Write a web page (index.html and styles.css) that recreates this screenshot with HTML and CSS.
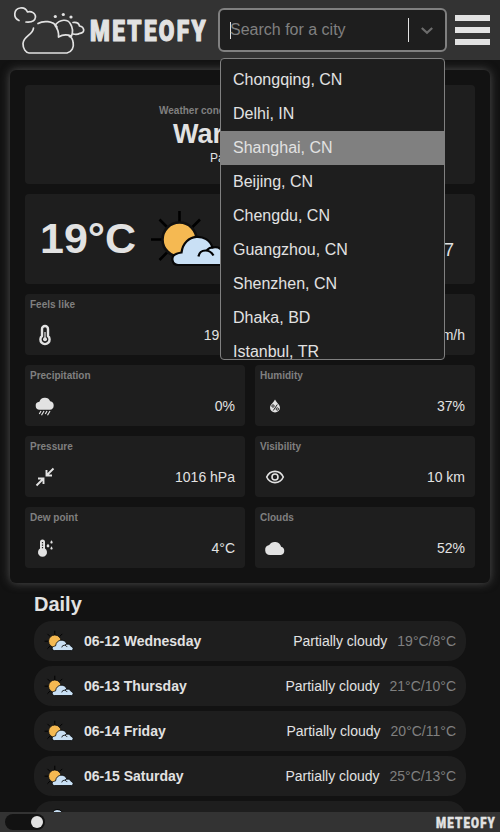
FILE: index.html
```html
<!DOCTYPE html>
<html lang="en">
<head>
<meta charset="utf-8">
<title>Meteofy</title>
<link rel="stylesheet" href="styles.css">
</head>
<body>
<svg class="defs" width="0" height="0">
  <symbol id="partly" viewBox="0 0 80 60">
    <g stroke="#000" stroke-width="2.600" fill="none">
      <path d="M28.500 2v12M0 30.500h12M8.500 10.500l8 8M49 10.500l-8 8M8.500 51l8-8"/>
      <circle cx="28.500" cy="30.500" r="17" fill="#f5b952" stroke="#111"/>
      <path d="M27 56a5.700 5.700 0 0 1-2-11q2-1 5.500-1.500C33 23.500 57 23.500 61.500 38.500q8-2 11 6q5.500 1 6 6q0 5.500-4 5.500z" fill="#c9e0f5" stroke="#080808" stroke-width="2.200"/>
      <path d="M47.500 47.500q1-6 7-6q5 0 8 5M56 41q3-3 6.500-2.500" stroke-width="2.200"/>
    </g>
  </symbol>
</svg>
<header class="top">
  <div class="brandbox">
    <svg width="89" height="60" viewBox="0 0 89 60">
      <g fill="none" stroke="#e2e2e2" stroke-width="1.700" stroke-linecap="round" stroke-linejoin="round">
        <path d="M19 20.500C12.500 17.500 14 9 20 8c4-.8 6.500 1.500 7.500 4c4-1 8 1 8 5c-.5 4-4 5.500-9.500 5"/>
        <path d="M38 23.500c5-3 15-3 19 3.500M33.500 28c-.5 7-10 8-10.500 15.500c-.2 5 3 9.500 6 9.500h38c5-1 7-6 6.200-10c-.4-4-1.700-6-4-6.500M55 25.500c5-7 13-6.500 15.500-1.500c2.500 4 2.500 8 1 12c-4-1.500-9-1.500-13 1c.5-5-1-8.500-3.500-11.500M73 22.500c4-.5 6 1 6.500 3.500c5 1 6 7 .5 7.300c-2 1.200-4 1.500-7 .7"/>
      </g>
      <g fill="#e2e2e2"><circle cx="55.300" cy="16.500" r="1.600"/><circle cx="63.300" cy="14.500" r="1.600"/><circle cx="71" cy="17" r="1.600"/></g>
    </svg>
    <svg width="120" height="44" viewBox="0 0 120 44"><text class="brand" x="1" y="33" textLength="118" lengthAdjust="spacingAndGlyphs">METEOFY</text></svg>
  </div>
  <div class="search">
    <span class="caret"></span><span class="hint">Search for a city</span>
    <span class="sep"></span>
    <svg class="chev" width="20" height="20" viewBox="0 0 20 20"><path d="M4.800 8l5.200 4.800 5.200-4.800" fill="none" stroke="#6c6c6c" stroke-width="2.200"/></svg>
    <div class="menu">
      <div>Chongqing, CN</div><div>Delhi, IN</div><div class="on">Shanghai, CN</div><div>Beijing, CN</div><div>Chengdu, CN</div><div>Guangzhou, CN</div><div>Shenzhen, CN</div><div>Dhaka, BD</div><div>Istanbul, TR</div>
    </div>
  </div>
  <div class="burger"><i></i><i></i><i></i></div>
</header>
<main>
  <section class="panel">
    <div class="card cond">
      <small>Weather conditions in Warsaw, PL</small>
      <strong>Warm today</strong>
      <span>Partially cloudy</span>
    </div>
    <div class="card temp">
      <b>19°C</b>
      <svg width="80" height="60"><use href="#partly"/></svg>
      <span>13:07</span>
    </div>
    <div class="grid">
      <div class="card stat"><h4>Feels like</h4><div>
        <svg width="20" height="20" viewBox="0 0 20 20"><path d="M7 11V4a3 3 0 0 1 6 0v7a4.600 4.600 0 1 1-6 0z" fill="none" stroke="#e2e2e2" stroke-width="2.400"/><path d="M10 7v7" stroke="#e2e2e2" stroke-width="1.200"/><circle cx="10" cy="14.200" r="2" fill="#e2e2e2"/></svg><span>19°C</span></div></div>
      <div class="card stat"><h4>Wind</h4><div>
        <svg width="20" height="20" viewBox="0 0 20 20"><path d="M2 8h10q3 0 3-3t-3-2M2 12h14" fill="none" stroke="#e2e2e2" stroke-width="1.500"/></svg><span>11 km/h</span></div></div>
      <div class="card stat"><h4>Precipitation</h4><div>
        <svg width="20" height="20" viewBox="0 0 20 20"><path d="M5 13.800a4 4 0 0 1-.6-8A5.800 5.800 0 0 1 15.200 5.300A4.300 4.300 0 0 1 14.800 13.800z" fill="#e2e2e2"/><path d="M6 15l-1.700 3M9 15l-2.500 4.300M12 15l-1.700 3M15 15l-2.500 4.300" stroke="#e2e2e2" stroke-width="1.200"/></svg><span>0%</span></div></div>
      <div class="card stat"><h4>Humidity</h4><div>
        <svg width="20" height="20" viewBox="0 0 20 20"><path d="M10 3.500C8 7 5 9 5 11.800a5 4.700 0 0 0 10 0C15 9 12 7 10 3.500z" fill="#e2e2e2"/><path d="M12.300 8.500l-4 6" stroke="#1e1e1e"/><circle cx="8" cy="10" r="1.200" fill="none" stroke="#1e1e1e" stroke-width=".9"/><circle cx="12.300" cy="13" r="1.200" fill="none" stroke="#1e1e1e" stroke-width=".9"/></svg><span>37%</span></div></div>
      <div class="card stat"><h4>Pressure</h4><div>
        <svg width="20" height="20" viewBox="0 0 20 20"><path d="M18.500 1.500L12 8M11.500 3v5.500H17M1.500 18.500L8 12M3 11.500h5.500V17" fill="none" stroke="#e2e2e2" stroke-width="1.900"/></svg><span>1016 hPa</span></div></div>
      <div class="card stat"><h4>Visibility</h4><div>
        <svg width="20" height="20" viewBox="0 0 20 20"><path d="M1.700 10C5 2.500 15 2.500 18.300 10C15 17.500 5 17.500 1.700 10z" fill="none" stroke="#e2e2e2" stroke-width="1.600"/><circle cx="10" cy="10" r="3" fill="none" stroke="#e2e2e2" stroke-width="1.600"/></svg><span>10 km</span></div></div>
      <div class="card stat"><h4>Dew point</h4><div>
        <svg width="20" height="20" viewBox="0 0 20 20"><path d="M5 10.500V4a2.500 2.500 0 0 1 5 0v6.500a4.500 4.500 0 1 1-5 0z" fill="#e2e2e2"/><path d="M7.500 4v1.200M7.500 6.500v1.200M7.500 9v1.200" stroke="#1e1e1e" stroke-width="1.200"/><g fill="#e2e2e2"><path d="M13 5.800l1.200 1.800a1.300 1.300 0 1 1-2.400 0z"/><path d="M16.500 2.200l1 1.600a1.150 1.150 0 1 1-2 0zM16.500 8.300l1 1.600a1.150 1.150 0 1 1-2 0z"/></g></svg><span>4°C</span></div></div>
      <div class="card stat"><h4>Clouds</h4><div>
        <svg width="20" height="20" viewBox="0 0 20 20"><path d="M5 17a5 5 0 0 1-.8-9.900A6.500 6.500 0 0 1 16.100 8.800A4.200 4.200 0 0 1 15.800 17z" fill="#e2e2e2"/></svg><span>52%</span></div></div>
    </div>
  </section>
  <section class="daily">
    <h2>Daily</h2>
    <div class="row"><svg width="30" height="22" viewBox="0 0 80 60"><use href="#partly"/></svg><b>06-12 Wednesday</b><span>Partially cloudy</span><em>19°C/8°C</em></div>
    <div class="row"><svg width="30" height="22" viewBox="0 0 80 60"><use href="#partly"/></svg><b>06-13 Thursday</b><span>Partially cloudy</span><em>21°C/10°C</em></div>
    <div class="row"><svg width="30" height="22" viewBox="0 0 80 60"><use href="#partly"/></svg><b>06-14 Friday</b><span>Partially cloudy</span><em>20°C/11°C</em></div>
    <div class="row"><svg width="30" height="22" viewBox="0 0 80 60"><use href="#partly"/></svg><b>06-15 Saturday</b><span>Partially cloudy</span><em>25°C/13°C</em></div>
    <div class="row last"><svg width="30" height="22" viewBox="0 0 30 22"><path d="M3 17q0-5 4-6q0-11.500 6-11.500q6 0 7 8q7 0 7 9.500z" fill="#c9e0f5" stroke="#000"/></svg></div>
  </section>
</main>
<footer><span class="toggle"><i></i></span>
  <svg width="62" height="20" viewBox="0 0 62 20"><text class="brand small" x="1" y="15.500" textLength="60" lengthAdjust="spacingAndGlyphs">METEOFY</text></svg>
</footer>
</body>
</html>
```
FILE: styles.css
```css
* { box-sizing: border-box; }
body {
  margin: 0;
  height: 832px;
  overflow: hidden;
  display: flex;
  flex-direction: column;
  background: #121212;
  color: #e2e2e2;
  font-family: "Liberation Sans", Arial, sans-serif;
}
svg { display: block; flex: none; overflow: visible; }
.defs { position: absolute; }
.top {
  height: 60px;
  flex: none;
  display: flex;
  align-items: center;
  padding-right: 10px;
  background: #333;
}
.brandbox { display: flex; align-items: center; width: 218px; flex: none; }
.brand {
  font-family: Roboto, sans-serif;
  font-size: 29px;
  font-weight: 900;
  letter-spacing: 3px;
  fill: #e2e2e2;
  stroke: #e2e2e2;
  stroke-width: 1.2;
  stroke-linejoin: round;
}
.brand.small { font-size: 15px; letter-spacing: 1.5px; stroke-width: .5; }
.search {
  position: relative;
  width: 229px;
  height: 44px;
  border: 2px solid #808080;
  border-radius: 6px;
  background: #1e1e1e;
  display: flex;
  align-items: center;
  padding-left: 10px;
}
.caret { width: 1px; height: 17px; background: #e2e2e2; }
.hint { flex: 1; color: #808080; font-size: 16px; margin-left: -1px; }
.sep { width: 1px; height: 24px; background: #e2e2e2; }
.chev { margin: 0 8px; }
.menu {
  position: absolute;
  z-index: 5;
  top: 48px;
  left: 0;
  width: 225px;
  height: 302px;
  padding: 4px 0;
  overflow: hidden;
  border: 1px solid #808080;
  border-radius: 4px;
  background: #1e1e1e;
  font-size: 16px;
  line-height: 18px;
}
.menu div { padding: 8px 12px; }
.menu .on { background: #808080; }
.burger { margin-left: 8px; width: 35px; display: grid; gap: 6px; }
.burger i { height: 6px; background: #e2e2e2; }
main { flex: 1; min-height: 0; overflow: hidden; padding-top: 10px; }
.panel {
  margin: 0 10px;
  padding: 15px;
  border-radius: 6px;
  background: #121212;
  box-shadow: 0 0 10px #505050;
  display: grid;
  gap: 10px;
}
.card { background: #1e1e1e; border-radius: 4px; }
.cond { height: 99px; padding: 20px 0 0 134px; }
.cond small { display: block; font-size: 10px; line-height: 12px; font-weight: bold; color: #808080; }
.cond strong { display: block; margin-left: 14px; font-size: 27px; line-height: 34px; }
.cond span { display: block; margin-left: 51px; font-size: 12px; line-height: 14px; }
.temp { height: 90px; display: flex; align-items: center; padding: 0 21px 0 15px; }
.temp b { width: 96px; margin-top: -2px; font-size: 43px; }
.temp svg { margin-left: 15px; }
.temp span { margin: 23px 0 0 auto; font-size: 18px; }
.grid { display: grid; grid-template-columns: 1fr 1fr; gap: 10px; }
.stat { height: 61px; padding: 5px 10px 0 5px; }
.stat h4 { margin: 0; font-size: 10px; line-height: 12px; color: #808080; }
.stat div { display: flex; align-items: center; justify-content: space-between; height: 20px; margin: 14px 0 0 5px; font-size: 14px; }
.daily { padding: 10px 34px 0; }
.daily h2 { margin: 0 0 5px; font-size: 20px; line-height: 23px; }
.row { height: 40px; margin-bottom: 5px; border-radius: 18px; background: #1e1e1e; display: flex; align-items: center; padding: 0 10px; font-size: 14px; }
.row b { margin-left: 10px; flex: 1; }
.row em { font-style: normal; color: #808080; margin-left: 10px; }
footer { height: 20px; flex: none; background: #333; display: flex; align-items: center; justify-content: space-between; padding: 0 3px 0 5px; }
.toggle { width: 40px; height: 16px; border-radius: 8px; background: #121212; display: flex; align-items: center; justify-content: flex-end; padding-right: 2px; }
.toggle i { width: 12px; height: 12px; border-radius: 50%; background: #e2e2e2; }
```
